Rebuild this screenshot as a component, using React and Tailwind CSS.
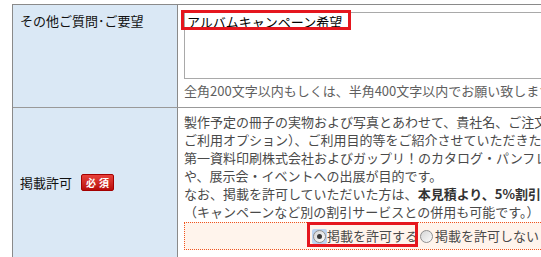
import React from 'react';

// お問い合わせフォームの一部（その他ご質問・掲載許可の2行）

function Radio({ checked, focused }) {
  const circle = (
    <span className="flex h-[13px] w-[13px] items-center justify-center rounded-full border border-[#8f8f8f] bg-gradient-to-br from-[#d6d6d6] to-[#fbfbfb]">
      {checked && <span className="h-[5px] w-[5px] rounded-full bg-[#3a3a3a]" />}
    </span>
  );
  if (!focused) return circle;
  return (
    <span className="flex h-[15px] w-[15px] items-center justify-center rounded-[2px] bg-[#bcd3f0]">
      {circle}
    </span>
  );
}

function RequiredBadge() {
  return (
    <span className="inline-flex h-[17px] w-[33px] items-center justify-center rounded-[2px] border border-[#a40000] bg-gradient-to-b from-[#e8403a] to-[#b80808] text-[10px] font-bold leading-none tracking-[3px] text-white pl-[3px]">
      必須
    </span>
  );
}

export default function App() {
  return (
    <div className="relative h-[257px] w-[541px] overflow-hidden bg-white font-['Noto_Sans_CJK_JP','Noto_Sans',sans-serif] text-[13px]">
      <div className="flex h-full">
        <div className="ml-[3px] w-px bg-[#dcdcdc]" />
        <div className="ml-[9px] mt-[4px] w-[700px] shrink-0 border-l border-t border-[#8a8a8a]">
          {/* その他ご質問・ご要望 */}
          <div className="flex border-b border-[#999]">
            <div className="w-[165px] shrink-0 border-r border-[#8a8a8a] bg-[#dae8f5] px-[7px] pt-[7px] leading-[18px] text-[#111]">
              その他ご質問･ご要望
            </div>
            <div className="h-[102px] flex-1 px-[6px] pt-[7px]">
              <div className="relative h-[67px] w-[520px] border border-[#a9a9a9] bg-white px-[2px] pt-[1px] leading-[16px] text-black">
                アルバムキャンペーン希望
                <span className="absolute left-[-4px] top-[-3px] h-[20px] w-[170px] border-[3px] border-[#e5161e]" />
              </div>
              <p className="mt-[3px] whitespace-nowrap leading-[18px] text-[#5e5e5e]">
                全角200文字以内もしくは、半角400文字以内でお願い致します。
              </p>
            </div>
          </div>

          {/* 掲載許可 */}
          <div className="flex border-b border-[#999]">
            <div className="flex w-[165px] shrink-0 items-center gap-[9px] border-r border-[#8a8a8a] bg-[#dae8f5] px-[7px] leading-[18px] text-[#111]">
              <span>掲載許可</span>
              <RequiredBadge />
            </div>
            <div className="flex-1 px-[6px] pb-[7px] pt-[5px]">
              <div className="whitespace-nowrap leading-[18px] text-[#4a4a4a]">
                <div>製作予定の冊子の実物および写真とあわせて、貴社名、ご注文内容（仕様・</div>
                <div>ご利用オプション）、ご利用目的等をご紹介させていただきたいと考えております。</div>
                <div>第一資料印刷株式会社およびガップリ！のカタログ・パンフレット、ホームページ</div>
                <div>や、展示会・イベントへの出展が目的です。</div>
                <div>
                  なお、掲載を許可していただいた方は、
                  <b className="text-[#333]">本見積より、5%割引</b>
                  させていただきます。
                </div>
                <div>（キャンペーンなど別の割引サービスとの併用も可能です。）</div>
              </div>
              <div className="mt-[1px] flex h-[28px] w-[483px] items-center justify-center border border-dotted border-[#f0541e] bg-[#fff4ec] text-[#4a4a4a]">
                <label className="relative flex items-center">
                  <Radio checked focused />
                  <span className="leading-[18px]">掲載を許可する</span>
                  <span className="absolute left-[-5px] top-[-5px] h-[25px] w-[111px] border-[3px] border-[#e5161e]" />
                </label>
                <label className="ml-[2px] flex items-center">
                  <Radio />
                  <span className="ml-[2px] leading-[18px]">掲載を許可しない</span>
                </label>
              </div>
            </div>
          </div>
        </div>
      </div>
    </div>
  );
}
